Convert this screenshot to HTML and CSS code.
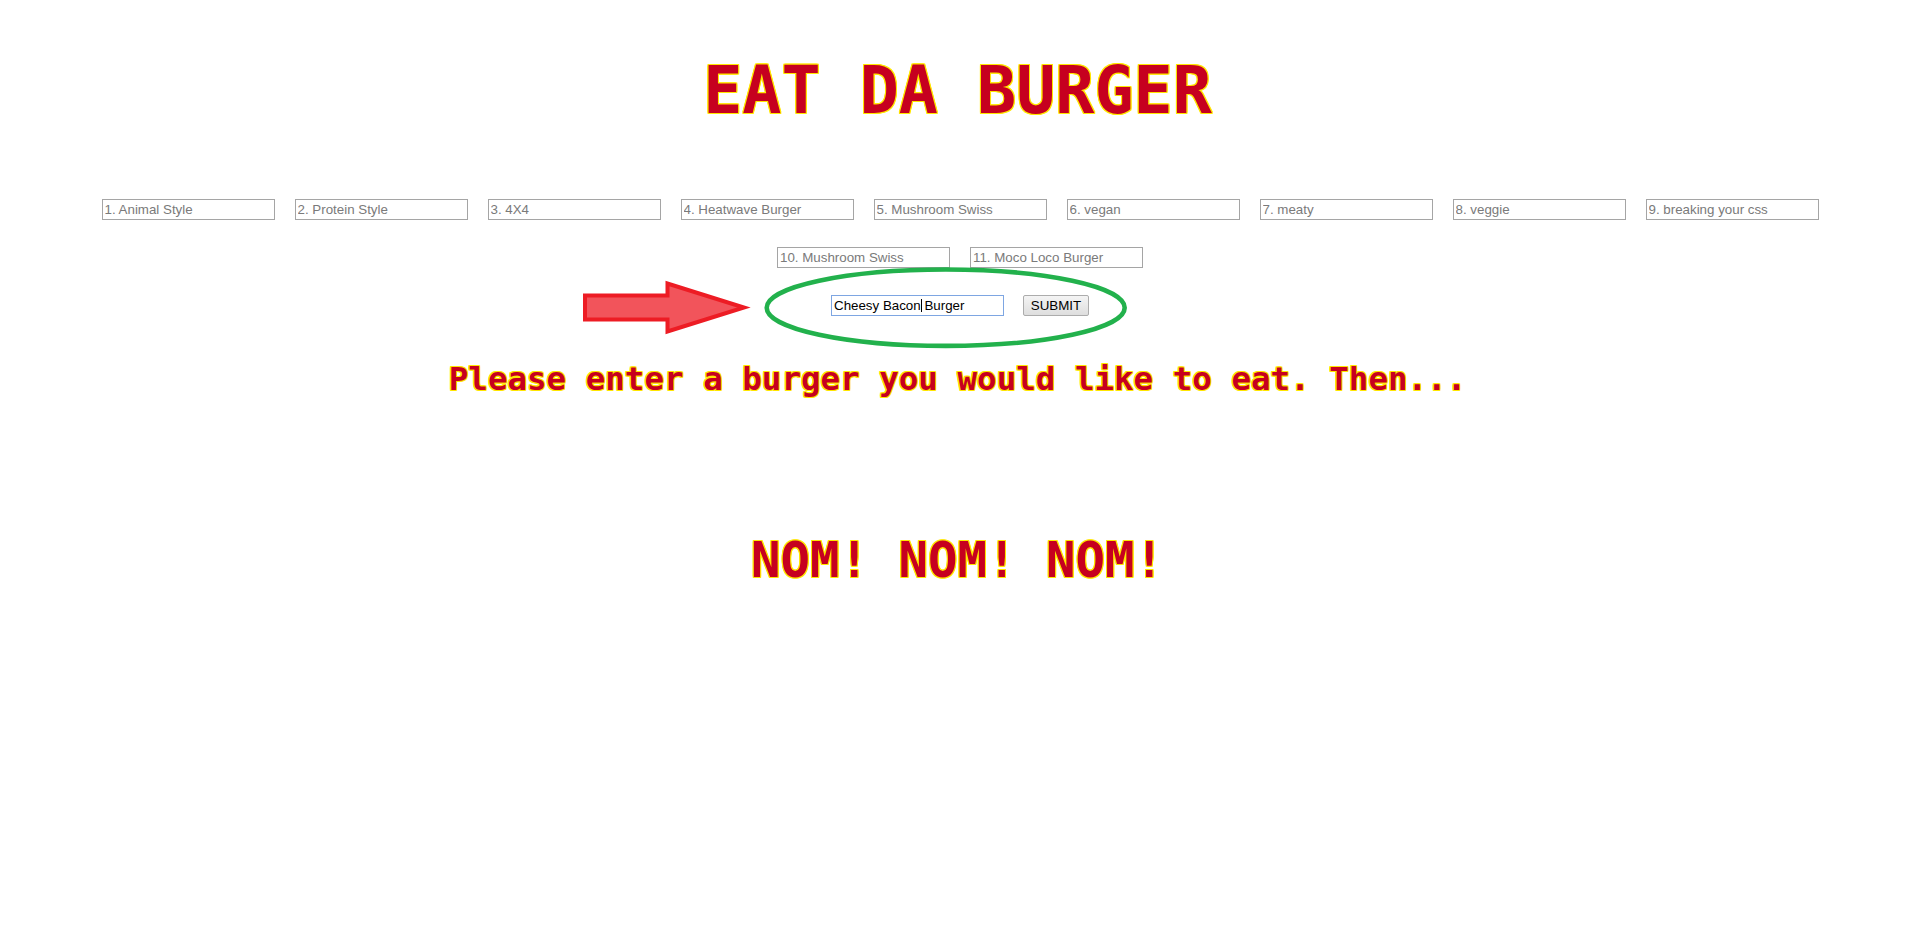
FILE: index.html
```html
<!DOCTYPE html>
<html lang="en">
<head>
<meta charset="utf-8">
<title>Eat Da Burger</title>
<link rel="stylesheet" href="styles.css">
</head>
<body>
<main class="page">
  <h1 class="title">EAT DA BURGER</h1>

  <div class="menu">
    <input class="burger" type="text" value="1. Animal Style" readonly>
    <input class="burger" type="text" value="2. Protein Style" readonly>
    <input class="burger" type="text" value="3. 4X4" readonly>
    <input class="burger" type="text" value="4. Heatwave Burger" readonly>
    <input class="burger" type="text" value="5. Mushroom Swiss" readonly>
    <input class="burger" type="text" value="6. vegan" readonly>
    <input class="burger" type="text" value="7. meaty" readonly>
    <input class="burger" type="text" value="8. veggie" readonly>
    <input class="burger" type="text" value="9. breaking your css" readonly>
    <input class="burger" type="text" value="10. Mushroom Swiss" readonly>
    <input class="burger" type="text" value="11. Moco Loco Burger" readonly>
  </div>

  <form class="order">
    <span class="field">
      <input class="new-burger" type="text" value="Cheesy Bacon Burger">
      <span class="caret"></span>
    </span>
    <button class="submit" type="button">SUBMIT</button>
    <svg class="arrow" width="185" height="65" viewBox="0 0 185 65" aria-hidden="true">
      <polygon points="10,20.5 92.5,20.5 92.5,8.5 169,32.5 92.5,56.5 92.5,44.5 10,44.5" fill="#f2545b" stroke="#ed1c24" stroke-width="4" stroke-linejoin="miter"/>
    </svg>
    <svg class="ring" width="372" height="90" viewBox="0 0 372 90" aria-hidden="true">
      <ellipse cx="185.7" cy="44.7" rx="179" ry="38.2" fill="none" stroke="#22b14c" stroke-width="4.6"/>
    </svg>
  </form>

  <p class="prompt">Please enter a burger you would like to eat. Then...</p>

  <p class="nom">NOM! NOM! NOM!</p>
</main>
</body>
</html>
```

FILE: styles.css
```css
html, body {
  margin: 0;
  padding: 0;
  background: #ffffff;
}

.page {
  padding-top: 58px;
  font-family: "DejaVu Sans Mono", "Liberation Mono", monospace;
}

.title,
.prompt,
.nom {
  margin: 0;
  text-align: center;
  font-weight: bold;
  line-height: 1;
  color: #c6001f;
  text-shadow:
    1px 0 0 #ffe600, -1px 0 0 #ffe600, 0 1px 0 #ffe600, 0 -1px 0 #ffe600,
    1px 1px 0 #ffe600, -1px -1px 0 #ffe600, 1px -1px 0 #ffe600, -1px 1px 0 #ffe600;
  white-space: pre;
}

.title {
  font-size: 65px;
}

.menu {
  width: 1740px;
  margin: 76px auto 0;
  padding-left: 5px;
  display: flex;
  flex-wrap: wrap;
  justify-content: center;
  gap: 27px 20px;
}

.burger,
.new-burger {
  box-sizing: border-box;
  width: 173px;
  height: 21px;
  margin: 0;
  padding: 1px 2px;
  border: 1px solid #a5a5a5;
  background: #ffffff;
  font-family: "Liberation Sans", Arial, sans-serif;
  font-size: 13.33px;
  color: #7a7a7a;
  outline: none;
}

.order {
  position: relative;
  margin: 27px 0 0 0;
  padding-left: 5px;
  display: flex;
  justify-content: center;
  align-items: center;
  gap: 19px;
  height: 21px;
}

.field {
  position: relative;
  display: block;
  height: 21px;
}

.new-burger {
  display: block;
  color: #000000;
  border-color: #7ea6e2;
}

.caret {
  position: absolute;
  left: 89.5px;
  top: 4px;
  width: 1px;
  height: 13px;
  background: #000000;
}

.submit {
  box-sizing: border-box;
  width: 66px;
  height: 21px;
  margin: 0;
  padding: 0;
  border: 1px solid #acacac;
  border-radius: 2px;
  background: linear-gradient(#f4f4f4, #dedede);
  font-family: "Liberation Sans", Arial, sans-serif;
  font-size: 13.33px;
  color: #000000;
}

.arrow {
  position: absolute;
  left: calc(50% - 382.5px);
  top: -20px;
}

.ring {
  position: absolute;
  left: calc(50% - 197.5px);
  top: -32px;
}

.prompt {
  margin-top: 47px;
  font-size: 32.5px;
}

.nom {
  margin-top: 140px;
  font-size: 49px;
}
```
